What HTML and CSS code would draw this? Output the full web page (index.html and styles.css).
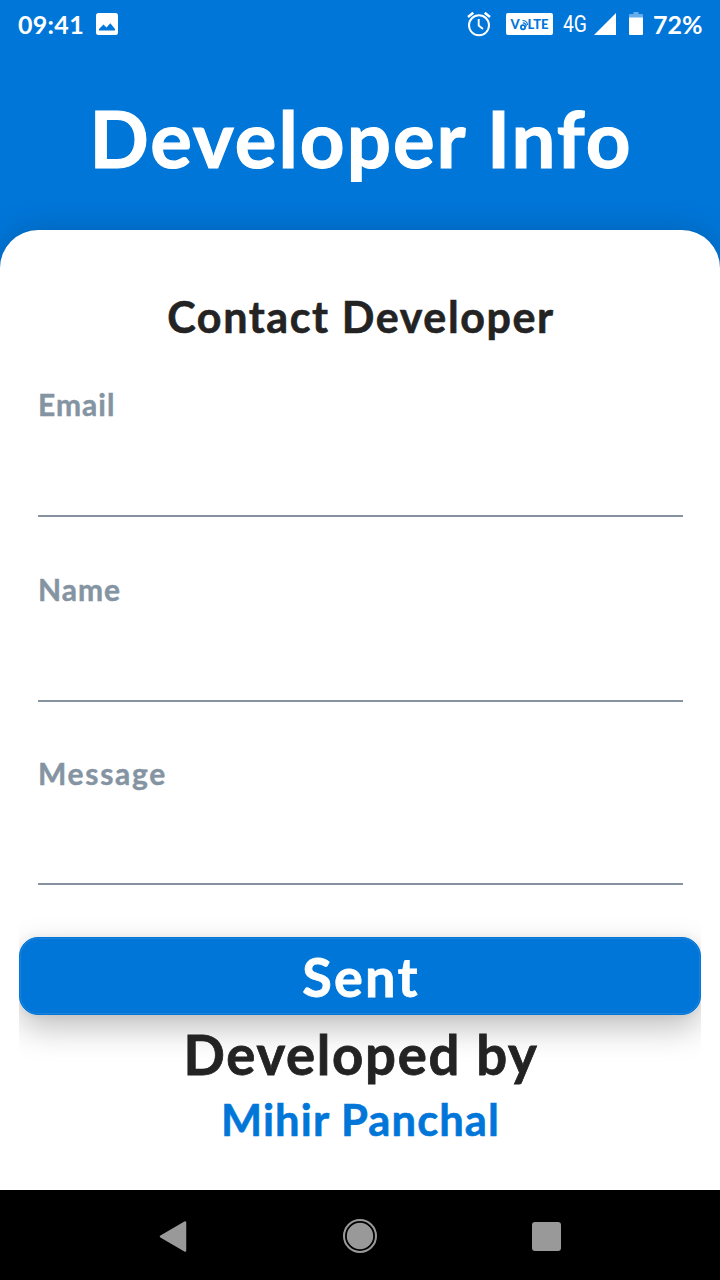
FILE: index.html
```html
<!DOCTYPE html>
<html lang="en">
<head>
<meta charset="utf-8">
<title>Developer Info</title>
<link rel="stylesheet" href="styles.css">
</head>
<body>
<div class="screen">
  <div class="status">
    <span class="time">09:41</span>
    <svg class="photo" width="22" height="22" viewBox="0 0 22 22"><rect width="22" height="22" rx="2.5" fill="#fff"/><path d="M3 17.500V16l4.500-4.500 3 3 3.800-4.300L19 16v1.500z" fill="#0176d9"/></svg>
    <div class="indicators">
      <svg class="alarm" width="24" height="26" viewBox="0 0 24 26" fill="none" stroke="#fff" stroke-width="2"><circle cx="12" cy="14.300" r="10"/><path d="M1 6 6.300 1.700M23 6 17.700 1.700" stroke-width="2.400"/><path d="M11.700 8v6.500l4.300 3.600" stroke-width="1.900"/></svg>
      <div class="volte"><span>V</span><svg width="8" height="15" viewBox="0 0 8 15" fill="none" stroke="#0176d9"><circle cx="3" cy="10.200" r="2.100" stroke-width="1.800"/><path d="M2.800 5.900q3.400.2 3.600 3.600M2.500 3.500q4.800.2 5 4.400" stroke-width="1.100"/></svg><span>LTE</span></div>
      <span class="network">4G</span>
      <svg class="signal" width="22" height="22" viewBox="0 0 22 22"><path d="M22 0v22H0z" fill="#fff"/></svg>
      <svg class="battery" width="14" height="23" viewBox="0 0 14 23"><path d="M4.500 0h5v2H13q1 0 1 1v3H0V3q0-1 1-1h3.500z" fill="#67adea"/><path d="M0 5.500h14V22q0 1-1 1H1q-1 0-1-1z" fill="#fff"/></svg>
      <span class="percent">72%</span>
    </div>
  </div>
  <header class="header"><h1>Developer Info</h1></header>
  <main class="card">
    <h2>Contact Developer</h2>
    <form class="form">
      <label class="field"><span class="email">Email</span></label>
      <label class="field"><span class="name">Name</span></label>
      <label class="field last"><span class="message">Message</span></label>
    </form>
    <div class="action"><button type="button">Sent</button></div>
    <p class="by">Developed by</p>
    <p class="author">Mihir Panchal</p>
  </main>
  <nav class="nav">
    <svg width="28" height="32" viewBox="0 0 28 32"><path d="M2 16.500 26 2.500v28z" fill="#999" stroke="#999" stroke-width="2.500" stroke-linejoin="round"/></svg>
    <svg width="34" height="34" viewBox="0 0 34 34"><circle cx="17" cy="17" r="16" fill="none" stroke="#999" stroke-width="2"/><circle cx="17" cy="17" r="13.200" fill="#999"/></svg>
    <svg width="29" height="29" viewBox="0 0 29 29"><rect width="29" height="29" rx="3" fill="#999"/></svg>
  </nav>
</div>
</body>
</html>
```
FILE: styles.css
```css
* { box-sizing: border-box; }
body { margin: 0; font-family: Lato, "Open Sans", sans-serif; font-weight: 700; }
h1, h2, p { margin: 0; font-weight: 700; text-align: center; white-space: nowrap; }
h1, h2, p, button, .field { -webkit-text-stroke: .014em currentColor; }
.screen { width: 720px; height: 1280px; display: flex; flex-direction: column; background: #0176d9; overflow: hidden; }
.status { height: 48px; display: flex; align-items: center; padding: 0 18px; color: #fff; font-size: 25px; line-height: 48px; }
.time { width: 78px; letter-spacing: .3px; }
.photo { margin-bottom: 1px; }
.indicators { margin-left: auto; display: flex; align-items: center; }
.alarm { margin-right: 15px; }
.volte { width: 47px; height: 22px; border-radius: 2px; background: #fff; color: #0176d9; display: flex; align-items: center; justify-content: center; font: 900 13px/22px Lato, sans-serif; margin-right: 10px; }
.network { width: 31px; font: 400 23.500px/48px Roboto, sans-serif; transform: scaleX(.82); transform-origin: left; }
.signal { margin-right: 13px; }
.battery { margin-right: 10px; margin-bottom: 1px; }
.percent { width: 49px; }
.header { height: 182px; padding-top: 43px; }
h1 { padding-left: 2px; font-size: 78px; line-height: 94px; letter-spacing: 2px; color: #fff; }
.card { height: 960px; padding-top: 61px; background: #fff; border-radius: 38px 38px 0 0; box-shadow: 0 0 32px rgba(0, 0, 0, .18); color: #232323; }
h2 { padding-left: 2px; font-size: 43px; line-height: 52px; letter-spacing: 1.600px; }
.form { padding: 42px 37px 0 38px; display: flex; flex-direction: column; }
.field { height: 132px; padding-top: 1px; border-bottom: 2px solid #8792a0; color: #8494a2; font-size: 30px; line-height: 36px; }
.field:nth-child(2) { margin: 53px 0 51px; }
.last { padding-top: 2px; }
.email, .name { letter-spacing: 1px; }
.message { letter-spacing: 1.700px; }
.action { margin: 52px 19px 0; height: 78px; clip-path: inset(-20px 0 -60px); }
button { display: block; width: 100%; height: 78px; padding: 1px 0 0 2px; border: 1px solid #0176d9; border-radius: 19px; background: #0176d9; color: #fff; font: 700 54px/75px Lato, sans-serif; letter-spacing: 2.200px; box-shadow: inset 0 0 0 1px #1a82dd, 0 13px 32px rgba(0, 0, 0, .25), 0 0 10px rgba(0, 0, 0, .06); }
.by { position: relative; margin-top: 6px; padding-left: 2px; font-size: 54.500px; line-height: 66px; letter-spacing: 1.700px; }
.author { margin-top: 6px; padding-left: 1px; font-size: 43.500px; line-height: 52px; letter-spacing: 1.100px; color: #0176d9; }
.nav { height: 90px; flex: none; background: #000; display: flex; align-items: center; justify-content: space-between; padding: 2px 159px 0; }
```
